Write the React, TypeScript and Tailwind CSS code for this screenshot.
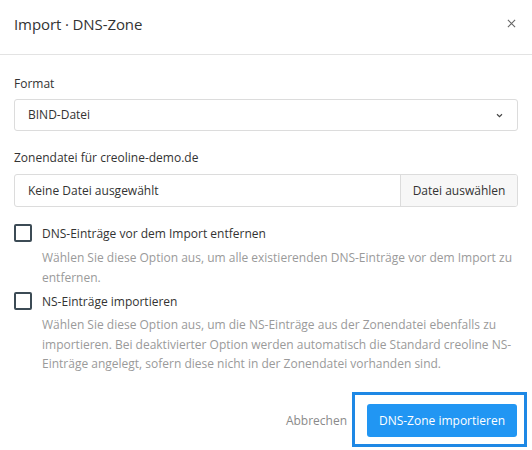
import React from "react";

export default function App() {
  return (
    <div
      className="w-[532px] h-[450px] bg-white text-[#333] relative overflow-hidden"
      style={{ fontFamily: '"Open Sans", "Noto Sans", sans-serif' }}
    >
      <div className="h-[55px] border-b border-[#e3e3e3] flex items-start justify-between pl-[14px] pr-[14px] pt-[12px]">
        <div className="text-[15px] leading-[24px] text-[#333] tracking-[-0.1px]">Import · DNS-Zone</div>
        <button className="mr-[2px]">
          <svg width="9" height="9" viewBox="0 0 10 10" className="mt-[7px]">
            <path d="M1 1 L9 9 M9 1 L1 9" stroke="#666" strokeWidth="1.2" />
          </svg>
        </button>
      </div>

      <div className="px-[14px] pt-[19px]">
        <div className="text-[12px] leading-[20px] mb-[5px]">Format</div>
        <div className="h-[32px] border border-[#dcdcdc] rounded-[3px] flex items-center justify-between pl-[13px] pr-[14px]">
          <span className="text-[12px]">BIND-Datei</span>
          <svg width="7" height="5" viewBox="0 0 8 6">
            <path d="M1 1.5 L4 4.5 L7 1.5" stroke="#444" strokeWidth="1.4" fill="none" />
          </svg>
        </div>

        <div className="text-[12px] leading-[20px] mt-[17px] mb-[6px]">Zonendatei für creoline-demo.de</div>
        <div className="h-[33px] border border-[#dcdcdc] rounded-[3px] flex items-stretch overflow-hidden">
          <div className="flex-1 flex items-center pl-[13px] text-[12px]">Keine Datei ausgewählt</div>
          <div className="w-[117px] bg-[#f7f7f7] border-l border-[#dcdcdc] flex items-center justify-center text-[12px]">
            Datei auswählen
          </div>
        </div>

        <div className="mt-[17px] flex gap-[10px]">
          <div className="w-[18px] h-[18px] border-2 border-[#3c4b55] rounded-[2px] shrink-0" />
          <div>
            <div className="text-[12px] leading-[20px]">DNS-Einträge vor dem Import entfernen</div>
            <div className="text-[12px] leading-[20px] text-[#9a9a9a] mt-[4px] pr-[6px]">
              Wählen Sie diese Option aus, um alle existierenden DNS-Einträge vor dem Import zu entfernen.
            </div>
          </div>
        </div>

        <div className="mt-[4px] flex gap-[10px]">
          <div className="w-[18px] h-[18px] border-2 border-[#3c4b55] rounded-[2px] shrink-0" />
          <div>
            <div className="text-[12px] leading-[20px]">NS-Einträge importieren</div>
            <div className="text-[12px] leading-[19.5px] text-[#9a9a9a] mt-[3px] pr-[6px]">
              Wählen Sie diese Option aus, um die NS-Einträge aus der Zonendatei ebenfalls zu importieren. Bei deaktivierter Option werden automatisch die Standard creoline NS-Einträge angelegt, sofern diese nicht in der Zonendatei vorhanden sind.
            </div>
          </div>
        </div>
      </div>

      <div className="absolute left-0 right-0 top-[404px] flex justify-end items-center pr-[15px] gap-[20px]">
        <button className="text-[12px] text-[#8a8a8a]">Abbrechen</button>
        <div className="relative">
          <button className="h-[33px] w-[150px] bg-[#2196f3] text-white text-[12px] rounded-[3px]">
            DNS-Zone importieren
          </button>
          <div className="absolute left-[-15px] top-[-12px] right-[-10px] bottom-[-10px] border-[3px] border-[#1e88e5] pointer-events-none" />
        </div>
      </div>
    </div>
  );
}
